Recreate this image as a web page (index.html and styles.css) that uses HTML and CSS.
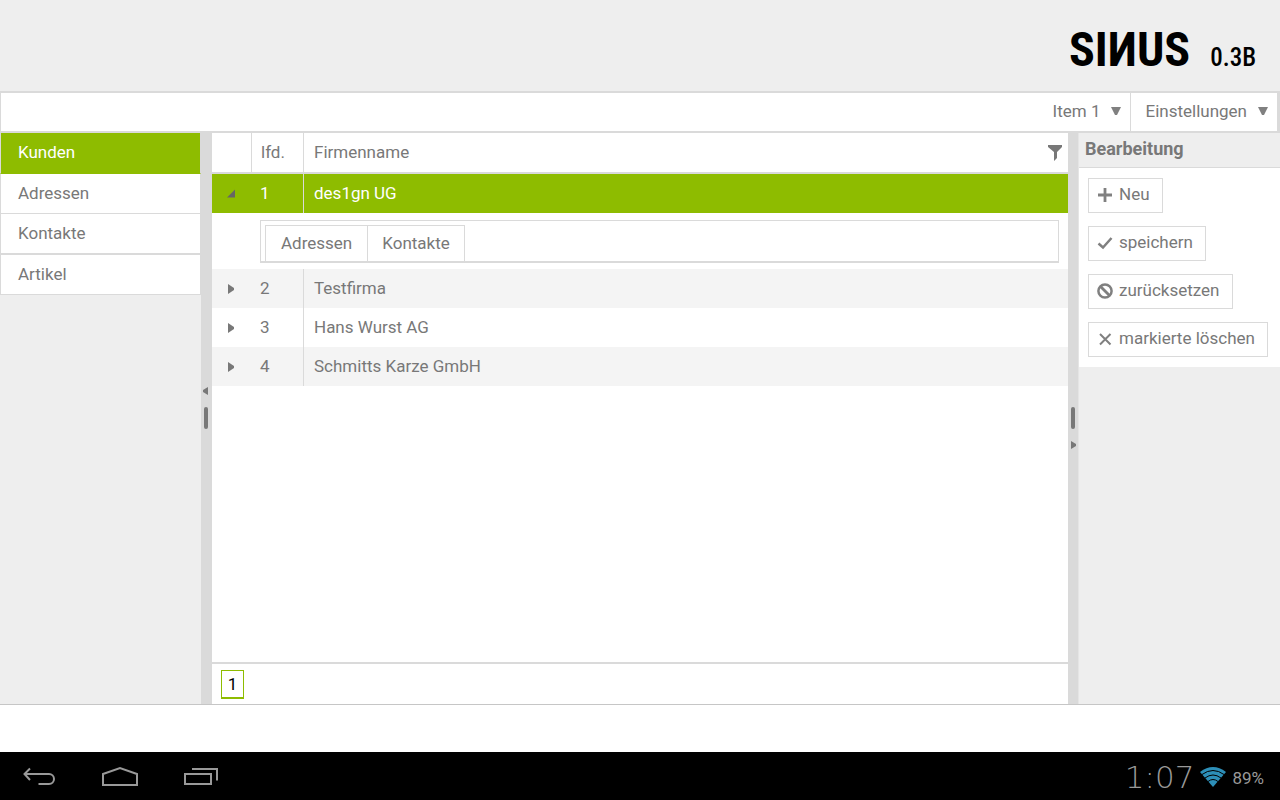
FILE: index.html
```html
<!DOCTYPE html>
<html lang="de">
<head>
<meta charset="utf-8">
<meta name="viewport" content="width=device-width, initial-scale=1">
<title>SINUS</title>
<link rel="stylesheet" href="styles.css">
</head>
<body>
<header class="brand">
  <span class="brand-name">SIИUS</span>
  <span class="brand-version">0.3B</span>
</header>

<nav class="menubar">
  <button class="menu-item" type="button">Item 1 <svg class="caret" viewBox="0 0 10 8"><path d="M0 0h10L6 8H4z"/></svg></button>
  <button class="menu-item" type="button">Einstellungen <svg class="caret" viewBox="0 0 10 8"><path d="M0 0h10L6 8H4z"/></svg></button>
</nav>

<main class="workspace">
  <nav class="sidebar">
    <a class="side-link active" href="#kunden">Kunden</a>
    <a class="side-link" href="#adressen">Adressen</a>
    <a class="side-link" href="#kontakte">Kontakte</a>
    <a class="side-link" href="#artikel">Artikel</a>
  </nav>

  <div class="splitter">
    <svg class="split-arrow" viewBox="0 0 5 8"><path d="M5 0v8L0 5V3z"/></svg>
    <span class="grip"></span>
    <span class="split-space"></span>
  </div>

  <section class="grid">
    <table class="customers">
      <thead>
        <tr>
          <th class="col-toggle"></th>
          <th class="col-number">lfd.</th>
          <th class="col-name"><div class="head-name">Firmenname
            <button class="filter" type="button" aria-label="Filter"><svg viewBox="0 0 14 16"><path d="M0 0h14v2L9 7v6l-3 3V7L0 2z"/></svg></button></div></th>
        </tr>
      </thead>
      <tbody>
        <tr class="selected">
          <td class="toggle"><button class="expander" type="button" aria-label="Details schließen"><svg viewBox="0 0 8 9"><path d="M8 0v8H0z"/></svg></button></td>
          <td class="number">1</td><td>des1gn UG</td>
        </tr>
        <tr class="detail">
          <td></td>
          <td colspan="2">
            <div class="tabstrip">
              <button class="tab" type="button">Adressen</button>
              <button class="tab" type="button">Kontakte</button>
            </div>
          </td>
        </tr>
        <tr class="alt">
          <td class="toggle"><button class="expander" type="button" aria-label="Details öffnen"><svg viewBox="0 0 8 10"><path d="M1 0l6 4v2l-6 4z"/></svg></button></td>
          <td class="number">2</td><td>Testfirma</td>
        </tr>
        <tr>
          <td class="toggle"><button class="expander" type="button" aria-label="Details öffnen"><svg viewBox="0 0 8 10"><path d="M1 0l6 4v2l-6 4z"/></svg></button></td>
          <td class="number">3</td><td>Hans Wurst AG</td>
        </tr>
        <tr class="alt">
          <td class="toggle"><button class="expander" type="button" aria-label="Details öffnen"><svg viewBox="0 0 8 10"><path d="M1 0l6 4v2l-6 4z"/></svg></button></td>
          <td class="number">4</td><td>Schmitts Karze GmbH</td>
        </tr>
      </tbody>
    </table>
    <footer class="pager"><button class="page" type="button">1</button></footer>
  </section>

  <div class="splitter splitter-right">
    <span class="split-space"></span>
    <span class="grip"></span>
    <svg class="split-arrow" viewBox="0 0 5 8"><path d="M0 0v8l5-3V3z"/></svg>
  </div>

  <aside class="editor">
    <h2 class="editor-title">Bearbeitung</h2>
    <div class="actions">
      <button class="action" type="button"><svg class="icon" viewBox="0 0 16 16"><path d="M8 1v14M1 8h14" stroke-width="2.8"/></svg>Neu</button>
      <button class="action" type="button"><svg class="icon" viewBox="0 0 16 16"><path d="M1.500 8.500l4.500 4L14.500 3" stroke-width="2.500"/></svg>speichern</button>
      <button class="action" type="button"><svg class="icon" viewBox="0 0 16 16"><circle cx="8" cy="8" r="6.600" stroke-width="2.500"/><path d="M3.500 3.500l9 9" stroke-width="2.800"/></svg>zurücksetzen</button>
      <button class="action" type="button"><svg class="icon" viewBox="0 0 16 16"><path d="M3 3l10.500 10.500M13.500 3L3 13.500" stroke-width="2"/></svg>markierte löschen</button>
    </div>
  </aside>
</main>

<div class="statusbar"></div>

<footer class="system">
  <div class="system-keys">
    <button class="key" type="button" aria-label="Zurück"><svg viewBox="0 0 36 22"><path d="M3 8h24a5 5 0 0 1 0 10H16.500M8 2.500L2.500 8l5.500 6"/></svg></button>
    <button class="key" type="button" aria-label="Start"><svg viewBox="0 0 36 22"><path d="M1 8L18 2l17 6v11H1z"/></svg></button>
    <button class="key" type="button" aria-label="Letzte Apps"><svg viewBox="0 0 36 22"><path d="M3 8h26v10H3zM10 3h25v11.500"/></svg></button>
  </div>
  <div class="system-info">
    <span class="clock">1:07</span>
    <svg class="wifi" viewBox="0 0 26 20"><path class="wifi-fan" d="M13 20L0 5Q13-5 26 5z"/><path class="wifi-gap" d="M2 7.500q11-8 22 0M5 11q8-6 16 0M8 14.500q5-4 10 0"/></svg>
    <span class="battery">89%</span>
  </div>
</footer>
</body>
</html>
```
FILE: styles.css
```css
* { box-sizing: border-box; }

body {
  margin: 0;
  min-height: 100vh;
  display: flex;
  flex-direction: column;
  background: #fff;
  color: #787878;
  font: 17px/20px Roboto, "Liberation Sans", sans-serif;
}

button {
  margin: 0;
  padding: 0;
  border: 0;
  background: none;
  color: inherit;
  font: inherit;
  cursor: pointer;
}

svg { display: block; }

.brand {
  display: flex;
  justify-content: flex-end;
  align-items: baseline;
  gap: 20px;
  padding: 20px 24px 11px;
  background: #eee;
  color: #000;
  font-family: "Liberation Sans Narrow", "Roboto Condensed", Roboto, sans-serif;
  font-weight: 700;
}
.brand-name { font-size: 48px; line-height: 60px; }
.brand-version { font-size: 25px; font-weight: 500; }

.menubar {
  display: flex;
  justify-content: flex-end;
  border: solid #dadada;
  border-width: 2px 3px 2px 1px;
}
.menu-item {
  display: flex;
  align-items: center;
  gap: 11px;
  height: 38px;
  padding: 0 9px 2px 14px;
}
.menu-item + .menu-item { border-left: 1px solid #dadada; }
.caret { width: 10px; height: 8px; fill: #808080; }

.workspace { flex: 1; display: flex; border-bottom: 1px solid #c6c6c6; }

.sidebar { width: 201px; background: #eee; }
.side-link {
  display: block;
  padding: 9px 17px 10px;
  background: #fff;
  border: solid #dadada;
  border-width: 0 1px 1px;
  color: inherit;
  text-decoration: none;
}
.side-link:nth-child(3) { border-bottom-width: 2px; }
.side-link.active { background: #8ebc00; color: #fff; border-bottom-color: #8ebc00; padding-bottom: 11px; }

.splitter {
  width: 11px;
  display: flex;
  flex-direction: column;
  align-items: center;
  justify-content: center;
  gap: 12px;
  padding: 0 2px 2px 0;
  background: #dadada;
}
.splitter-right { padding-right: 0; border-right: 1px solid #e5e5e5; }
.grip { width: 4px; height: 22px; border-radius: 2px; background: #787878; }
.split-arrow { width: 5px; height: 8px; fill: #787878; }
.split-space { height: 8px; }

.grid { flex: 1; display: flex; flex-direction: column; justify-content: space-between; }
.customers { width: 100%; border-spacing: 0; table-layout: fixed; }
.customers th {
  height: 41px;
  padding: 0 9px 2px;
  border-bottom: 2px solid #dadada;
  font-weight: 400;
  text-align: left;
}
.customers th + th { border-left: 1px solid #dadada; }
.customers .col-name { padding-left: 10px; }
.col-toggle { width: 39px; }
.col-number { width: 52px; }
.head-name { display: flex; justify-content: space-between; align-items: center; }
.filter { margin-right: -3px; padding-top: 2px; }
.filter svg { width: 14px; height: 16px; fill: #787878; }
.customers td { height: 39px; padding: 0 9px 2px; }
.customers td.toggle { padding: 0 0 1px 15px; }
.customers .number + td { padding-left: 10px; border-left: 1px solid #dadada; }
.alt { background: #f4f4f4; }
.selected { background: #8ebc00; color: #fff; }
.expander svg { width: 8px; height: 10px; fill: #787878; }
.selected .expander svg { fill: #666; }
.customers .detail td { height: 56px; padding: 1px 9px 0 9px; }
.tabstrip {
  display: flex;
  padding: 4px 4px 0;
  border: 1px solid #dadada;
  border-bottom-width: 2px;
}
.tab { height: 36px; padding: 0 14px 2px; border: solid #dadada; border-width: 1px 1px 0 0; }
.tab:first-child { border-left-width: 1px; padding-left: 15px; padding-right: 15px; }

.pager { padding: 6px 9px 5px; border-top: 2px solid #dadada; }
.page {
  display: block;
  width: 23px;
  height: 29px;
  padding-bottom: 1px;
  border: 1px solid #8ebc00;
  border-bottom-width: 2px;
  color: #000;
}

.editor { width: 201px; background: #eee; }
.editor-title {
  margin: 0;
  padding: 6px 6px 8px;
  border-bottom: 1px solid #dadada;
  font-size: 18px;
  line-height: 20px;
  font-weight: 700;
}
.actions {
  display: flex;
  flex-direction: column;
  align-items: flex-start;
  gap: 13px;
  padding: 10px 9px;
  background: #fff;
}
.action {
  display: flex;
  align-items: center;
  gap: 6px;
  height: 35px;
  padding: 0 12px 4px 8px;
  border: 1px solid #dadada;
  white-space: nowrap;
}
.icon { width: 16px; height: 16px; margin-top: 3px; fill: none; stroke: #808080; }

.statusbar { height: 47px; }

.system {
  height: 48px;
  display: flex;
  justify-content: space-between;
  align-items: center;
  padding: 2px 16px 0 22px;
  background: #000;
  color: #999;
}
.system-keys { display: flex; gap: 44px; }
.key svg { width: 36px; height: 22px; fill: none; stroke: #999; stroke-width: 2; }
.system-info { display: flex; align-items: center; gap: 6px; }
.clock { font: 200 31px/40px "DejaVu Sans", Inter, sans-serif; }
.wifi { width: 26px; height: 20px; }
.wifi-fan { fill: #2d8fb8; }
.wifi-gap { fill: none; stroke: #000; stroke-width: 1; }
.battery { padding-top: 2px; font-size: 17px; }
```
